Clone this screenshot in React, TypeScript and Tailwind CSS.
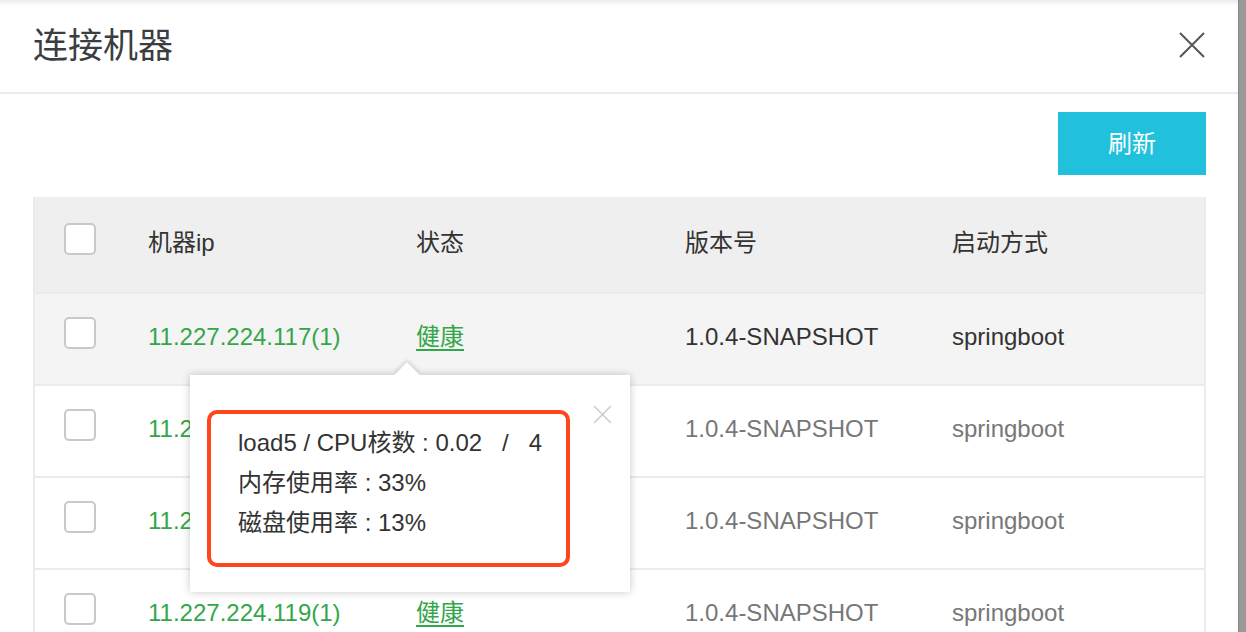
import React from "react";

const FONT = { fontFamily: '"Liberation Sans", "Noto Sans CJK SC", sans-serif' };

function Checkbox() {
  return <div className="w-[32px] h-[32px] mb-[8px] border-2 border-[#c9c9c9] rounded-[5px] bg-white" />;
}

type Row = { ip: string; bg: string; text: string };

const rows: Row[] = [
  { ip: "11.227.224.117(1)", bg: "bg-[#f4f4f4]", text: "text-[#333333]" },
  { ip: "11.227.224.118(1)", bg: "bg-white", text: "text-[#777777]" },
  { ip: "11.227.224.116(1)", bg: "bg-white", text: "text-[#777777]" },
  { ip: "11.227.224.119(1)", bg: "bg-white", text: "text-[#777777]" },
];

export default function App() {
  return (
    <div className="w-[1246px] h-[632px] overflow-hidden flex bg-white" style={FONT}>
      <div className="relative w-[1238px] h-full flex flex-col bg-white">
        <div className="h-[6px] bg-gradient-to-b from-[#ececec] to-white shrink-0" />
        <div className="h-[88px] shrink-0 flex items-center justify-between pl-[33px] pr-[33px] pb-[8px] border-b-2 border-[#ebebeb]">
          <div className="text-[35px] text-[#3a3d42] leading-none">连接机器</div>
          <svg width="26" height="26" viewBox="0 0 26 26" className="mt-[-1px]">
            <path d="M1 1 L25 25 M25 1 L1 25" stroke="#555" strokeWidth="2" fill="none" />
          </svg>
        </div>
        <div className="flex justify-end pr-[32px] pt-[18px] shrink-0">
          <button className="w-[148px] h-[63px] bg-[#21c1dd] text-white text-[24px] flex items-center justify-center">
            刷新
          </button>
        </div>
        <div className="mt-[22px] ml-[33px] w-[1173px] border-x-2 border-[#e8ecf0] shrink-0">
          <div className="h-[95px] pb-[4px] bg-[#efefef] grid grid-cols-[113px_268px_269px_267px_1fr] items-center text-[24px] text-[#333333]">
            <div className="pl-[29px] flex items-center h-full"><Checkbox /></div>
            <div>机器ip</div>
            <div>状态</div>
            <div>版本号</div>
            <div>启动方式</div>
          </div>
          {rows.map((r, i) => (
            <div
              key={i}
              className={`h-[92px] pb-[4px] border-t-2 border-[#e8ecf0] ${r.bg} grid grid-cols-[113px_268px_269px_267px_1fr] items-center text-[24px]`}
            >
              <div className="pl-[29px] flex items-center h-full"><Checkbox /></div>
              <div className="text-[#33a64a]">{r.ip}</div>
              <div className="text-[#33a64a] underline underline-offset-4">健康</div>
              <div className={r.text}>1.0.4-SNAPSHOT</div>
              <div className={r.text}>springboot</div>
            </div>
          ))}
        </div>

        <div className="absolute left-[190px] top-[375px] w-[440px] h-[217px] bg-white shadow-[0_0_8px_rgba(0,0,0,0.22)]">
          <div className="absolute left-[208px] top-[-9px] w-[18px] h-[18px] bg-white rotate-45 shadow-[-2px_-2px_4px_rgba(0,0,0,0.12)]" />
          <div className="absolute inset-0 bg-white" />
          <svg width="19" height="19" viewBox="0 0 19 19" className="absolute left-[403px] top-[30px]">
            <path d="M1 1 L18 18 M18 1 L1 18" stroke="#cccccc" strokeWidth="1.6" fill="none" />
          </svg>
          <div className="absolute left-[17px] top-[35px] w-[363px] h-[157px] border-4 border-[#fd461c] rounded-[10px] pl-[27px] pt-[9px] text-[24px] leading-[40px] text-[#333333]">
            <div className="whitespace-pre">load5 / CPU核数 : 0.02   /   4</div>
            <div>内存使用率 : 33%</div>
            <div>磁盘使用率 : 13%</div>
          </div>
        </div>
      </div>
      <div className="w-[8px] h-full bg-[#9a9a9a] border-l border-[#858585]" />
    </div>
  );
}
